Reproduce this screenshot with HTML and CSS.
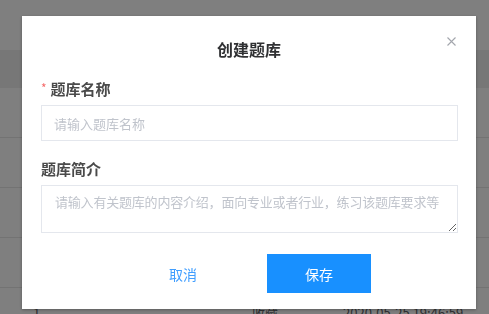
FILE: index.html
```html
<!DOCTYPE html>
<html lang="zh-CN">
<head>
<meta charset="utf-8">
<title>创建题库</title>
<link rel="stylesheet" href="styles.css">
</head>
<body>
<div class="page">
  <div class="topbar"></div>
  <div class="thead"></div>
  <div class="row"></div>
  <div class="row"></div>
  <div class="row"></div>
  <div class="row"></div>
  <div class="row last">
    <span class="cell c1">1</span>
    <span class="cell c2">收藏</span>
    <span class="cell c3">2020-05-25 19:46:59</span>
  </div>
</div>

<div class="overlay">
  <div class="dialog">
    <div class="dialog-header">
      <span class="dialog-title">创建题库</span>
      <button class="close" aria-label="关闭">
        <svg width="9" height="9" viewBox="0 0 9 9"><path d="M0.5 0.5L8.5 8.5M8.5 0.5L0.5 8.5" stroke="#a3a6ad" stroke-width="1.1" fill="none"/></svg>
      </button>
    </div>
    <div class="dialog-body">
      <div class="field">
        <label class="label"><span class="req">*</span>题库名称</label>
        <input class="input" type="text" placeholder="请输入题库名称">
      </div>
      <div class="field second">
        <label class="label">题库简介</label>
        <textarea class="textarea" placeholder="请输入有关题库的内容介绍，面向专业或者行业，练习该题库要求等"></textarea>
      </div>
    </div>
    <div class="dialog-footer">
      <button class="btn btn-text">取消</button>
      <button class="btn btn-primary">保存</button>
    </div>
  </div>
</div>
</body>
</html>
```

FILE: styles.css
```css
html, body {
  margin: 0;
  padding: 0;
  height: 100%;
  overflow: hidden;
}
body {
  font-family: "Noto Sans CJK SC", "Noto Sans", "Liberation Sans", sans-serif;
  background: #ffffff;
}
.page {
  display: flex;
  flex-direction: column;
}
.topbar {
  height: 50px;
  background: #ffffff;
}
.thead {
  height: 38px;
  background: #eeeeee;
}
.row {
  height: 49px;
  border-bottom: 1px solid #e6e6e6;
  display: flex;
  align-items: flex-end;
  font-size: 13px;
  color: #606266;
}
.row.last {
  height: 50px;
  align-items: flex-start;
  padding-top: 16px;
  box-sizing: border-box;
}
.cell {
  line-height: 18px;
}
.c1 { margin-left: 33px; width: 219px; }
.c2 { width: 91px; }
.c3 { }

.overlay {
  position: fixed;
  inset: 0;
  background: rgba(0, 0, 0, 0.5);
  display: flex;
  align-items: flex-start;
}
.dialog {
  margin-top: 16px;
  margin-left: 22px;
  width: 454px;
  height: 293px;
  background: #ffffff;
  box-shadow: 0 1px 3px rgba(0, 0, 0, 0.3);
  box-sizing: border-box;
  display: flex;
  flex-direction: column;
}
.dialog-header {
  position: relative;
  padding: 21px 20px 0;
  text-align: center;
}
.dialog-title {
  display: block;
  font-size: 16px;
  line-height: 24px;
  font-weight: bold;
  color: #303133;
}
.close {
  position: absolute;
  top: 21px;
  right: 20px;
  padding: 0;
  margin: 0;
  border: 0;
  background: none;
  width: 9px;
  height: 9px;
  display: flex;
}
.dialog-body {
  padding: 16px 18px 0 19px;
}
.field {
  display: flex;
  flex-direction: column;
}
.field.second {
  margin-top: 17px;
}
.label {
  font-size: 15px;
  line-height: 22px;
  font-weight: bold;
  color: #4a4a4a;
  margin-bottom: 5px;
}
.req {
  color: #f56c6c;
  font-size: 12px;
  font-weight: normal;
  margin-right: 4px;
  vertical-align: 2px;
}
.input, .textarea {
  box-sizing: border-box;
  width: 100%;
  border: 1px solid #e4e7ed;
  border-radius: 0;
  background: #ffffff;
  font-family: "Noto Sans CJK SC", "Noto Sans", sans-serif;
  font-size: 13px;
  color: #606266;
  outline: none;
  margin: 0;
}
.input {
  height: 36px;
  padding: 0 12px;
}
.textarea {
  height: 48px;
  padding: 6px 2px 6px 13px;
  line-height: 20px;
  resize: vertical;
  display: block;
  letter-spacing: -0.2px;
}
.input::placeholder, .textarea::placeholder {
  color: #c0c4cc;
}
.dialog-footer {
  display: flex;
  justify-content: center;
  gap: 32px;
  margin-top: 21px;
  padding-left: 4px;
}
.btn {
  width: 104px;
  height: 39px;
  font-family: "Noto Sans CJK SC", "Noto Sans", sans-serif;
  font-size: 14px;
  border: 0;
  margin: 0;
  padding: 0;
  border-radius: 0;
}
.btn-text {
  background: transparent;
  color: #409eff;
}
.btn-primary {
  background: #1890ff;
  color: #ffffff;
}
```
